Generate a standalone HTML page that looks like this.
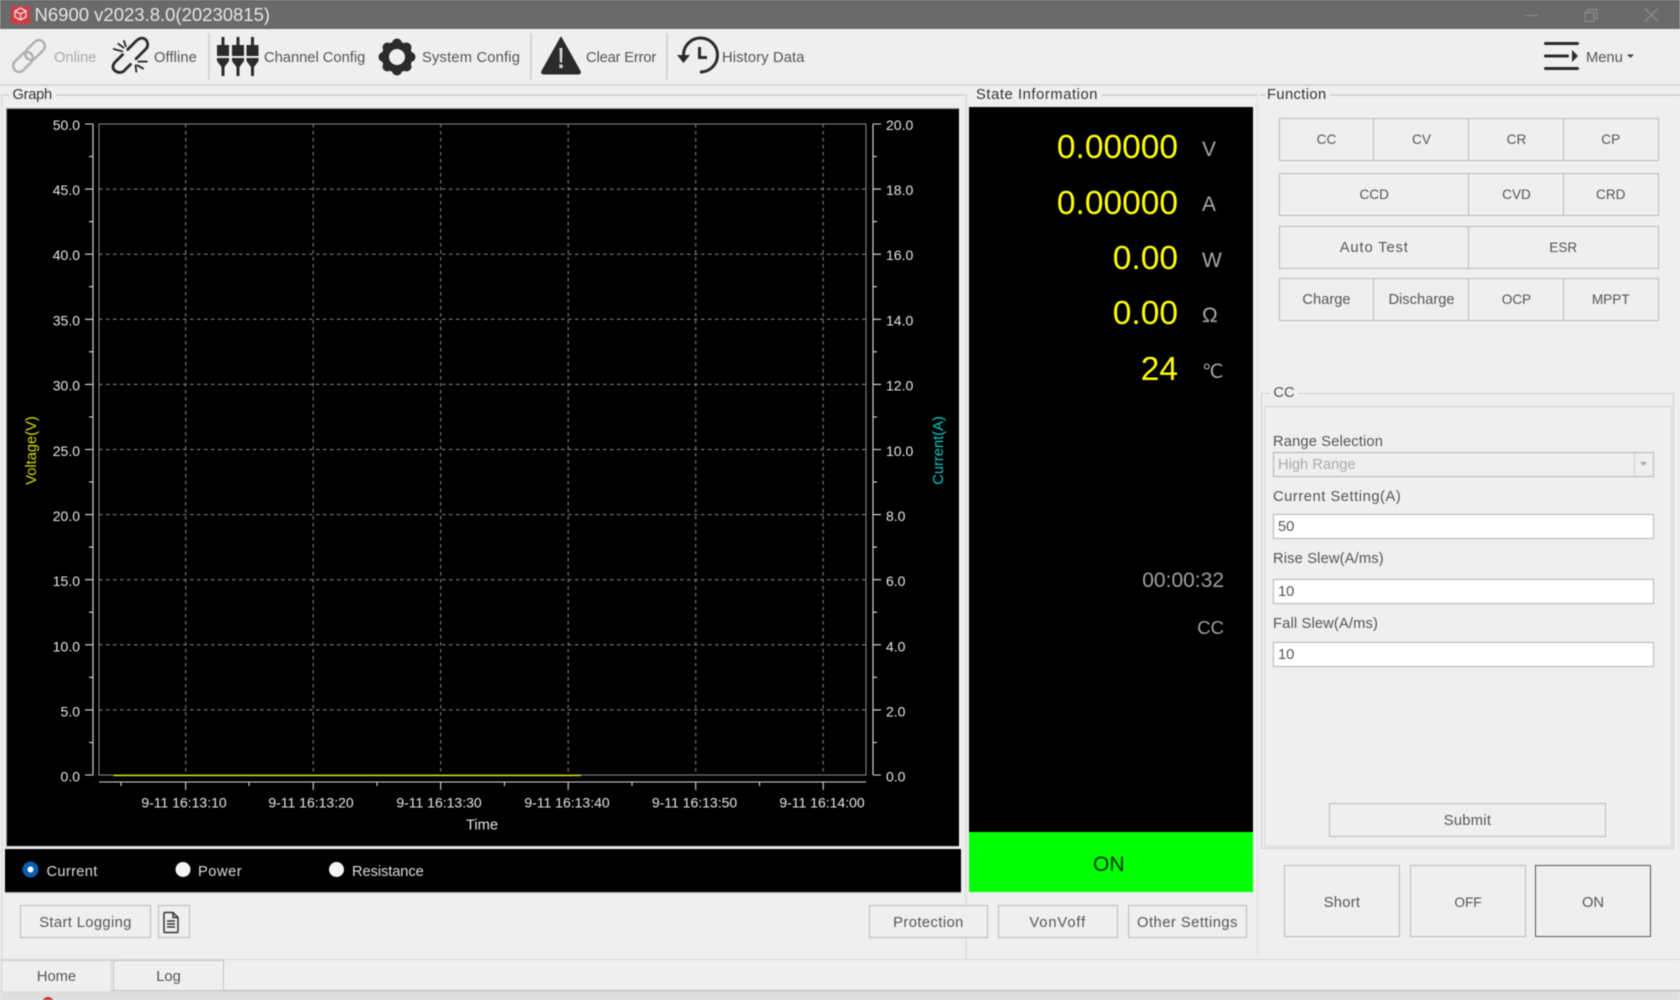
<!DOCTYPE html>
<html><head><meta charset="utf-8"><title>N6900</title>
<style>
html,body{margin:0;padding:0;background:#efefef}
#app{position:relative;width:1680px;height:1000px;overflow:hidden;background:#efefef;font-family:"Liberation Sans",sans-serif;font-size:14.7px;color:#555;filter:blur(.4px)}
#app div{position:absolute;box-sizing:border-box;white-space:nowrap}
.t{height:20px;line-height:20px}
.b{border:1.5px solid #b8b8b8;background:#efefef;display:flex;align-items:center;justify-content:center;padding-top:1px}
.d{padding-top:3px}
.c{font-size:13.6px;padding-top:0;padding-bottom:1px}
.l{background:#d6d6d6}
.v{background:#e2e2e2}
.in{border:1.5px solid #b4b4b4;background:#fff;left:1273px;width:381px;height:25px;line-height:25px;padding-left:4px;color:#555}
.lab{color:#555;left:1273px}
.y{color:#ff0;font-size:33.5px;height:40px;line-height:40px;right:502px;text-align:right}
.u{color:#aaa;font-size:21px;height:26px;line-height:26px;left:1202px}
svg{position:absolute;left:0;top:0}
</style></head><body>
<div id="app">
<div style="left:0;top:0;width:1680px;height:28.500px;background:#6a6a6a;border-top:1px solid #5a5a5a"></div>
<div style="left:11px;top:6px;width:19px;height:18px;background:#cf3b45;border-radius:2px"></div>
<div style="left:34.500px;top:2px;height:26px;line-height:26px;font-size:18.500px;color:#e6e6e6">N6900 v2023.8.0(20230815)</div>

<div class="l" style="left:0;top:84px;width:1680px;height:2px"></div>
<div class="l" style="left:208px;top:33px;width:1.500px;height:47px"></div>
<div class="l" style="left:530px;top:33px;width:1.500px;height:47px"></div>
<div class="l" style="left:666px;top:33px;width:1.500px;height:47px"></div>

<div class="t" style="left:54px;top:48px;color:#aaa">Online</div>
<div class="t" style="left:154px;top:48px;letter-spacing:.1px">Offline</div>
<div class="t" style="left:264px;top:48px">Channel Config</div>
<div class="t" style="left:422px;top:48px;letter-spacing:.2px">System Config</div>
<div class="t" style="left:586px;top:48px;letter-spacing:-.15px">Clear Error</div>
<div class="t" style="left:722px;top:48px;letter-spacing:.15px">History Data</div>
<div class="t" style="left:1586px;top:48px">Menu</div>

<!-- group frames -->
<div class="l" style="left:0;top:94px;width:9px;height:1.500px"></div>
<div class="l" style="left:56px;top:94px;width:912px;height:1.500px"></div>
<div class="v" style="left:1px;top:94px;width:1.500px;height:866px"></div>
<div class="v" style="left:965px;top:94px;width:1.500px;height:866px"></div>
<div class="l" style="left:1102px;top:94px;width:155px;height:1.500px"></div>
<div class="v" style="left:1256.500px;top:94px;width:1.500px;height:862px"></div>
<div class="l" style="left:1260px;top:94px;width:6px;height:1.500px"></div>
<div class="l" style="left:1330px;top:94px;width:350px;height:1.500px"></div>
<div class="l" style="left:0;top:958.500px;width:1680px;height:1.500px"></div>
<div class="t" style="left:12.500px;top:85px;color:#333;letter-spacing:-.3px">Graph</div>
<div class="t" style="left:976px;top:85px;color:#333;letter-spacing:.6px">State Information</div>
<div class="t" style="left:1267px;top:85px;color:#333;letter-spacing:.4px">Function</div>

<!-- graph black -->
<div style="left:6px;top:108px;width:953px;height:739px;background:#000;border-top:1.500px solid #9a9a9a;border-left:1px solid #9a9a9a;border-bottom:1.500px solid #c8c8c8"></div>
<div style="left:5px;top:849px;width:956px;height:43.500px;background:#000;border-bottom:1px solid #aaa"></div>
<div class="t" style="left:46.500px;top:862px;color:#ddd;letter-spacing:.3px">Current</div>
<div class="t" style="left:198px;top:862px;color:#ddd;letter-spacing:.5px">Power</div>
<div class="t" style="left:352px;top:862px;color:#ddd;letter-spacing:-.1px">Resistance</div>

<!-- state -->
<div style="left:969px;top:107px;width:283.500px;height:725px;background:#000"></div>
<div style="left:969px;top:832px;width:283.500px;height:60px;background:#0f0;color:#063006;font-size:21px;text-align:center;line-height:66px;padding-right:4px">ON</div>
<div class="y" style="top:127.500px">0.00000</div>
<div class="y" style="top:183.500px">0.00000</div>
<div class="y" style="top:238.500px">0.00</div>
<div class="y" style="top:293.500px">0.00</div>
<div class="y" style="top:350px">24</div>
<div class="u" style="top:137px">V</div>
<div class="u" style="top:192px">A</div>
<div class="u" style="top:248px">W</div>
<div class="u" style="top:303px">Ω</div>
<div class="u" style="top:360px;font-size:19px">℃</div>
<div class="u" style="top:568px;left:auto;right:456px;color:#a0a0a0">00:00:32</div>
<div class="u" style="top:615px;left:auto;right:456px;color:#a0a0a0;font-size:18.500px">CC</div>

<!-- function buttons -->
<div class="b c" style="left:1278.500px;top:118px;width:96px;height:43px">CC</div>
<div class="b c" style="left:1373px;top:118px;width:97px;height:43px">CV</div>
<div class="b c" style="left:1468px;top:118px;width:97px;height:43px">CR</div>
<div class="b c" style="left:1563px;top:118px;width:95.500px;height:43px">CP</div>
<div class="b c" style="left:1278.500px;top:173px;width:191.500px;height:43px">CCD</div>
<div class="b c" style="left:1468px;top:173px;width:97px;height:43px">CVD</div>
<div class="b c" style="left:1563px;top:173px;width:95.500px;height:43px">CRD</div>
<div class="b" style="left:1278.500px;top:226px;width:191.500px;height:43px;letter-spacing:.9px">Auto Test</div>
<div class="b c" style="left:1468px;top:226px;width:190.500px;height:43px">ESR</div>
<div class="b" style="left:1278.500px;top:278px;width:96px;height:43px">Charge</div>
<div class="b" style="left:1373px;top:278px;width:97px;height:43px">Discharge</div>
<div class="b c" style="left:1468px;top:278px;width:97px;height:43px">OCP</div>
<div class="b c" style="left:1563px;top:278px;width:95.500px;height:43px">MPPT</div>

<!-- CC group -->
<div style="left:1261px;top:393px;width:413px;height:456px;border:1.500px solid #d0d0d0"></div>
<div style="left:1263.500px;top:405.500px;width:408px;height:441px;border:1.500px solid #d4d4d4"></div>
<div class="t" style="left:1270px;top:383px;width:28px;text-align:center;background:#efefef">CC</div>
<div class="t lab" style="top:432px;letter-spacing:.15px">Range Selection</div>
<div class="in" style="top:451.500px;background:#efefef;color:#aaa">High Range</div>
<div style="left:1634px;top:453px;width:1px;height:22px;background:#cfcfcf"></div>
<div class="t lab" style="top:487px;letter-spacing:.55px">Current Setting(A)</div>
<div class="in" style="top:514px">50</div>
<div class="t lab" style="top:549px;letter-spacing:.15px">Rise Slew(A/ms)</div>
<div class="in" style="top:579px">10</div>
<div class="t lab" style="top:614px;letter-spacing:.15px">Fall Slew(A/ms)</div>
<div class="in" style="top:641.500px">10</div>
<div class="b d" style="left:1329px;top:802.500px;width:277px;height:34px;letter-spacing:.3px">Submit</div>
<div class="b d" style="left:1284px;top:865px;width:116px;height:72px;letter-spacing:.3px">Short</div>
<div class="b c" style="left:1410px;top:865px;width:116px;height:72px;padding:3px 0 0">OFF</div>
<div class="b d" style="left:1535px;top:865px;width:116px;height:72px;border-color:#555">ON</div>

<!-- bottom buttons -->
<div class="b d" style="left:20px;top:905px;width:131px;height:33px;letter-spacing:.4px">Start Logging</div>
<div class="b" style="left:158px;top:905px;width:32px;height:33px"></div>
<div class="b d" style="left:869px;top:905px;width:119px;height:33px;letter-spacing:.45px">Protection</div>
<div class="b d" style="left:998px;top:905px;width:119.500px;height:33px;letter-spacing:.9px">VonVoff</div>
<div class="b d" style="left:1128px;top:905px;width:119px;height:33px;letter-spacing:.5px">Other Settings</div>

<!-- tabs / status -->
<div style="left:0;top:990px;width:1680px;height:10px;background:#dedede;border-top:1.500px solid #b4b4b4"></div>
<div style="left:1px;top:960px;width:111px;height:30.500px;background:#efefef;border:1.500px solid #d0d0d0;border-bottom:none;text-align:center;line-height:32px">Home</div>
<div style="left:113px;top:960px;width:111px;height:31px;background:#efefef;border:1.500px solid #c4c4c4;text-align:center;line-height:32px">Log</div>
<div style="left:42px;top:997px;width:12px;height:12px;border-radius:50%;background:#c9302c"></div>

<svg width="1680" height="1000" viewBox="0 0 1680 1000" xmlns="http://www.w3.org/2000/svg">
<!-- app icon -->
<g fill="none" stroke="#f4d8d8" stroke-width="1.300"><path d="M20.500 8l5.500 3v6l-5.500 3-5.500-3v-6zM15 11l5.500 3 5.500-3M20.500 14v6"/></g>
<!-- window buttons -->
<g fill="none" stroke="#8a8a8a" stroke-width="1.200">
<path d="M1525 15.500h13"/>
<path d="M1585 12.500h9v9h-9zM1588 12.500v-3h9v9h-3"/>
<path d="M1645 8.500l13 13M1658 8.500l-13 13" stroke-width="1.500"/>
</g>
<!-- online -->
<g transform="translate(29 56) rotate(-45)" fill="none" stroke="#b0b0b0" stroke-width="2.400">
<rect x="-20" y="-6" width="23" height="12" rx="6"/><rect x="-3" y="-6" width="23" height="12" rx="6"/></g>
<!-- offline -->
<g transform="translate(130.500 56) scale(.93) translate(-130 -56)" fill="none" stroke="#2b2b2b" stroke-width="3" stroke-linecap="round">
<path d="M127 49L137 39C142 35 146 37 147.500 40C149 43 149 46 146.500 48.500L136 59"/>
<path d="M121.500 54.500L113 63C110 67 111 70 113.500 72C116 74 119 74 122 73L130 65"/>
<path d="M112 48.500l9 2.500M117 43l5.500 4M123 40l2 5.500M138.500 62h9M137.500 66l6 3.500M135.500 66l.7 7" stroke-width="2"/>
</g>
<!-- channel -->
<g fill="#2b2b2b">
<path d="M221.500 37h3v8h4.500v11h-12v-11h4.500zM217 58h12v3l-4.500 6v9h-3v-9l-4.500-6z"/>
<path d="M236.500 37h3v8h4.500v11h-12v-11h4.500zM232 58h12v3l-4.500 6v9h-3v-9l-4.500-6z"/>
<path d="M251 37h3v8h4.500v11h-12v-11h4.500zM246.500 58h12v3l-4.500 6v9h-3v-9l-4.500-6z"/>
</g>
<!-- gear -->
<g fill="#2b2b2b"><circle cx="397" cy="57" r="15.500"/>
<circle cx="397" cy="43.500" r="5"/><circle cx="397" cy="70.500" r="5"/><circle cx="383.500" cy="57" r="5"/><circle cx="410.500" cy="57" r="5"/>
<circle cx="387.500" cy="47.500" r="5"/><circle cx="406.500" cy="47.500" r="5"/><circle cx="387.500" cy="66.500" r="5"/><circle cx="406.500" cy="66.500" r="5"/>
<circle cx="397" cy="57" r="8" fill="#efefef"/></g>
<!-- warning -->
<path d="M561 37L580 71c1 2 0 3-2 3H544c-2 0-3-1-2-3z" fill="#2b2b2b" stroke="#2b2b2b" stroke-linejoin="round"/>
<path d="M559.500 48h3l-.4 14.500h-2.200zM559.300 64.500h3.400v3.500h-3.400z" fill="#d8d8d8"/>
<!-- history -->
<g fill="none" stroke="#2b2b2b" stroke-width="3">
<path d="M683.500 55A17 17 0 1 1 700 72"/>
<path d="M699.500 47V57.500H707"/></g>
<path d="M677 55h13l-6.500 8z" fill="#2b2b2b"/>
<!-- menu -->
<g stroke="#2b2b2b" stroke-width="3" stroke-linecap="round"><path d="M1545.500 43.500h32M1545.500 56h22M1545.500 68.500h32"/></g>
<path d="M1572 50l6 6-6 6z" fill="#2b2b2b"/>
<path d="M1627 54.500h7l-3.500 3.500z" fill="#444"/>
<!-- combo arrow -->
<path d="M1640 462h7l-3.500 4z" fill="#aaa"/>
<!-- radios -->
<circle cx="30.500" cy="869.500" r="8" fill="#0a5fb4"/><circle cx="30.500" cy="869.500" r="3" fill="#fff"/>
<circle cx="183" cy="869.500" r="7.500" fill="#f4f4f4"/><circle cx="336.500" cy="869.500" r="7.500" fill="#f4f4f4"/>
<!-- file icon -->
<path d="M165 912.500h8l5 5v14c0 .8-.5 1-1 1h-12c-.7 0-1-.4-1-1v-18c0-.6.4-1 1-1zM173 912.500v5h5M167 921h8M167 924h8M167 927h8" fill="none" stroke="#333" stroke-width="1.500"/>

<!-- chart -->
<g fill="none">
<path stroke="#8c8c8c" stroke-width="1" stroke-dasharray="3.500 3.500" d="M99 189.100H866M99 254.200H866M99 319.300H866M99 384.400H866M99 449.500H866M99 514.600H866M99 579.700H866M99 644.800H866M99 709.900H866M185.700 124V775M313.200 124V775M440.700 124V775M568.200 124V775M695.700 124V775M823.200 124V775"/>
<rect x="99" y="124" width="767" height="651" stroke="#8c8c8c" stroke-width="1"/>
<path stroke="#e0e0e0" stroke-width="1.100" d="M93 124V775M85 124H93M85 189.100H93M85 254.200H93M85 319.300H93M85 384.400H93M85 449.500H93M85 514.600H93M85 579.700H93M85 644.800H93M85 709.900H93M85 775H93M89 156.500H93M89 221.600H93M89 286.700H93M89 351.800H93M89 417H93M89 482H93M89 547.100H93M89 612.200H93M89 677.300H93M89 742.500H93"/>
<path stroke="#e0e0e0" stroke-width="1.100" d="M873 124V775M873 124H881M873 189.100H881M873 254.200H881M873 319.300H881M873 384.400H881M873 449.500H881M873 514.600H881M873 579.700H881M873 644.800H881M873 709.900H881M873 775H881M873 156.500H877M873 221.600H877M873 286.700H877M873 351.800H877M873 417H877M873 482H877M873 547.100H877M873 612.200H877M873 677.300H877M873 742.500H877"/>
<path stroke="#d8d8d8" stroke-width="1.100" d="M99 782H866M185.700 782V790M313.200 782V790M440.700 782V790M568.200 782V790M695.700 782V790M823.200 782V790M121 782V786M249 782V786M377 782V786M504.500 782V786M632 782V786M759.500 782V786"/>
<path stroke="#e6e600" stroke-width="1.300" d="M113.500 775.500H581"/>
</g>
<g font-family="Liberation Sans, sans-serif" font-size="14" fill="#e6e6e6">
<g text-anchor="end"><text x="80" y="130">50.0</text><text x="80" y="195">45.0</text><text x="80" y="260">40.0</text><text x="80" y="325.500">35.0</text><text x="80" y="390.500">30.0</text><text x="80" y="456">25.0</text><text x="80" y="521">20.0</text><text x="80" y="586">15.0</text><text x="80" y="651.500">10.0</text><text x="80" y="716.500">5.0</text><text x="80" y="781.500">0.0</text></g>
<g><text x="886" y="130">20.0</text><text x="886" y="195">18.0</text><text x="886" y="260">16.0</text><text x="886" y="325.500">14.0</text><text x="886" y="390.500">12.0</text><text x="886" y="456">10.0</text><text x="886" y="521">8.0</text><text x="886" y="586">6.0</text><text x="886" y="651.500">4.0</text><text x="886" y="716.500">2.0</text><text x="886" y="781.500">0.0</text></g>
<g text-anchor="middle"><text x="184" y="807.500">9-11 16:13:10</text><text x="311" y="807.500">9-11 16:13:20</text><text x="439" y="807.500">9-11 16:13:30</text><text x="567" y="807.500">9-11 16:13:40</text><text x="694.500" y="807.500">9-11 16:13:50</text><text x="822" y="807.500">9-11 16:14:00</text>
<text x="482" y="829.500" font-size="14.700">Time</text>
<text transform="translate(36 450.500) rotate(-90)" fill="#d8d800" font-size="14.700">Voltage(V)</text>
<text transform="translate(943 450.500) rotate(-90)" fill="#00c8c8" font-size="14.700">Current(A)</text></g>
</g>
</svg>
</div>
</body></html>
